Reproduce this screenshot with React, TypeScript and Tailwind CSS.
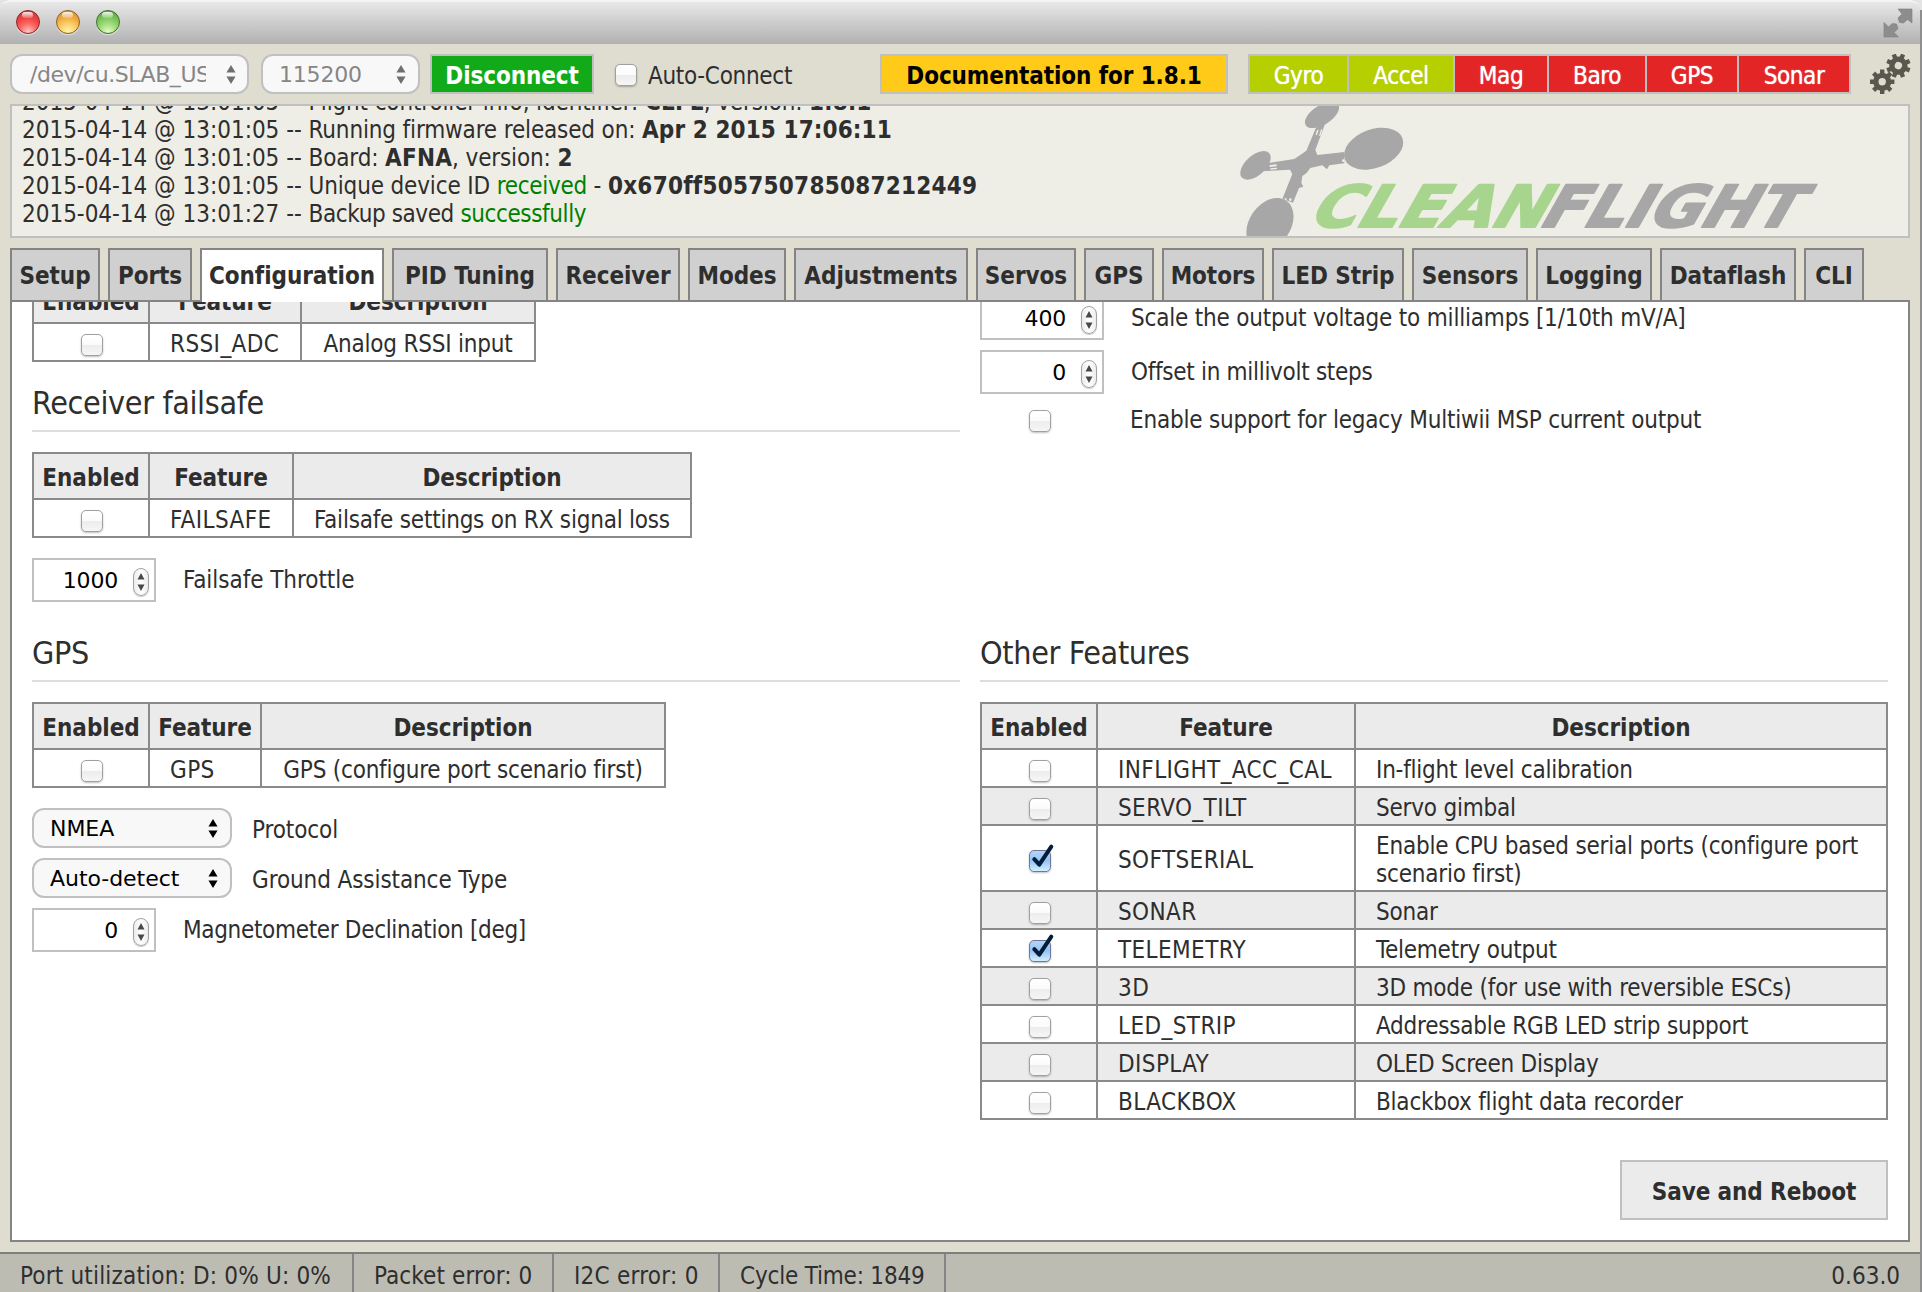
import type { ReactNode } from "react";

/* ---------- small controls ---------- */

function Checkbox({ checked = false }: { checked?: boolean }) {
  return (
    <span
      className={
        checked
          ? "relative block size-[22px] shrink-0 rounded-[5px] border-[1.5px] border-[#6f7894] bg-linear-to-b from-[#b4d4f6] via-[#94c4f5] to-[#d3f1ff] shadow-[0_1px_2px_rgba(0,0,0,0.25)]"
          : "relative block size-[22px] shrink-0 rounded-[5px] border-[1.5px] border-[#a0a0a0] bg-[linear-gradient(#ffffff_0%,#fbfbfb_48%,#ededed_52%,#f6f6f6_100%)] shadow-[0_1px_2px_rgba(0,0,0,0.25)]"
      }
    >
      {checked && (
        <svg className="absolute -top-[7px] -left-[2px] h-[28px] w-[28px] overflow-visible" viewBox="0 0 28 28">
          <path d="M6.3 15.2 L11.3 20.7 L23.3 2.6" fill="none" stroke="#041c38" strokeWidth="4" strokeLinecap="round" strokeLinejoin="round" />
        </svg>
      )}
    </span>
  );
}

function Arrows({ className }: { className: string }) {
  return (
    <svg className={className} viewBox="0 0 10 20">
      <path d="M5 0 L9.8 8 H0.2 Z M0.2 12 H9.8 L5 20 Z" fill="currentColor" />
    </svg>
  );
}

function NumberInput({ value }: { value: string }) {
  return (
    <div className="flex h-11 w-[124px] shrink-0 justify-end border-2 border-[#c0c0c0] bg-white pr-[5px]">
      <span className="pt-[7px] font-['DejaVu_Sans'] text-[22px] leading-[28px] tracking-[-0.2px] text-black">{value}</span>
      <span className="mt-2 ml-[15px] flex h-[28px] w-4 items-center justify-center rounded-full border-[1.5px] border-[#a2a2a2] bg-[linear-gradient(90deg,#ececec,#ffffff_50%,#ececec)] shadow-[0_1px_1px_rgba(0,0,0,0.2)]">
        <svg className="h-[20px] w-[8px] text-[#484848]" viewBox="0 0 8 20">
          <path d="M4 1 L7.5 7.4 H0.5 Z M0.5 12.6 H7.5 L4 19 Z" fill="currentColor" />
        </svg>
      </span>
    </div>
  );
}

function Select({ value }: { value: string }) {
  return (
    <div className="flex h-10 w-[200px] shrink-0 justify-between rounded-[12px] border-2 border-[#c0c0c0] bg-[#f8f8f8] pr-3 pl-4">
      <span className="pt-[5px] font-['DejaVu_Sans'] text-[22px] leading-[28px] tracking-[-0.05px] text-black">{value}</span>
      <Arrows className="mt-[9px] h-[19px] w-[10px] text-black" />
    </div>
  );
}

/* ---------- title bar ---------- */

function Light({ tone }: { tone: string }) {
  return (
    <span className={`relative block size-6 overflow-hidden rounded-full border-[1.5px] shadow-[0_1px_1px_rgba(255,255,255,0.6)] ${tone}`}>
      <span className="absolute top-[1px] left-[5px] h-[6px] w-[11px] rounded-full bg-linear-to-b from-white/90 to-white/20" />
    </span>
  );
}

function TitleBar() {
  return (
    <div className="flex h-11 shrink-0 justify-between rounded-t-[9px] border-t-2 border-[#f4f4f4] bg-linear-to-b from-[#e8e8e8] to-[#b1b1b1] pl-4">
      <div className="mt-2 flex gap-4">
        <Light tone="border-[#8d2423] bg-[radial-gradient(circle_at_50%_95%,#ffc9c4_0%,#fb6a66_35%,#ee4343_60%,#c63a3a_100%)]" />
        <Light tone="border-[#8f6020] bg-[radial-gradient(circle_at_50%_95%,#fff3ae_0%,#fbd16c_35%,#f2ac45_60%,#c98a35_100%)]" />
        <Light tone="border-[#3f7029] bg-[radial-gradient(circle_at_50%_95%,#e4fcc4_0%,#a4dd80_35%,#7cc75c_60%,#589a41_100%)]" />
      </div>
      <svg className="mt-[6px] mr-[7px] h-8 w-[30px]" viewBox="63 8 30 32">
        <path d="M78 9 H92 V23 L87.5 19.5 L83.5 23 L79.5 22.5 L78 18 L82 14 Z" fill="#8d8d8d" stroke="#7c7c7c" strokeWidth=".6" />
        <path d="M64 22.5 V37 H78.5 L74 32.5 L78 28.5 L76.5 24 L72.5 23.5 L68.5 27 Z" fill="#8d8d8d" stroke="#7c7c7c" strokeWidth=".6" />
      </svg>
    </div>
  );
}

/* ---------- toolbar ---------- */

const SENSORS = [
  { name: "Gyro", cell: "w-[97px] bg-[#b5cf00]" },
  { name: "Accel", cell: "w-[104px] bg-[#b5cf00]" },
  { name: "Mag", cell: "w-[92px] bg-[#e42526]" },
  { name: "Baro", cell: "w-[96px] bg-[#e42526]" },
  { name: "GPS", cell: "w-[90px] bg-[#e42526]" },
  { name: "Sonar", cell: "w-[110px] bg-[#e42526]" },
];

const TEETH = [0, 45, 90, 135, 180, 225, 270, 315];

function Gear({ x, y, turn }: { x: number; y: number; turn: number }) {
  return (
    <g transform={`translate(${x} ${y}) rotate(${turn})`} stroke="#5a584e" fill="none">
      <circle r="6.4" strokeWidth="5.4" />
      {TEETH.map((a) => (
        <path key={a} d="M0 -8 V-12.2" strokeWidth="4.4" transform={`rotate(${a})`} />
      ))}
    </g>
  );
}

function Toolbar() {
  return (
    <div className="flex h-[60px] shrink-0 pt-[10px] pl-[10px]">
      <div className="flex h-10 w-[239px] justify-between rounded-[12px] border-2 border-[#c0c0c0] bg-[#f8f8f8] pr-[11px] pl-[18px]">
        <span className="w-[176px] overflow-hidden pt-[5px] font-['DejaVu_Sans'] text-[22px] leading-[28px] tracking-[-0.45px] whitespace-nowrap text-[#868686]">/dev/cu.SLAB_US</span>
        <Arrows className="mt-[9px] h-[19px] w-[10px] text-[#6f6f6f]" />
      </div>
      <div className="ml-3 flex h-10 w-[159px] justify-between rounded-[12px] border-2 border-[#c0c0c0] bg-[#f8f8f8] pr-3 pl-4">
        <span className="pt-[5px] font-['DejaVu_Sans'] text-[22px] leading-[28px] tracking-[-0.2px] text-[#868686]">115200</span>
        <Arrows className="mt-[9px] h-[19px] w-[10px] text-[#6f6f6f]" />
      </div>
      <div className="ml-[10px] h-10 w-[164px] border-2 border-[#c0c0c0] bg-[#11aa18] pt-[6px] text-center font-bold tracking-[-0.1px] text-white">Disconnect</div>
      <div className="mt-[10px] ml-[21px]">
        <Checkbox />
      </div>
      <div className="mt-2 ml-[11px] w-[232px] tracking-[-0.3px]">Auto-Connect</div>
      <div className="h-10 w-[348px] border-2 border-[#c0c0c0] bg-[#ffca18] pt-[6px] text-center font-bold tracking-[-0.1px] text-black">Documentation for 1.8.1</div>
      <div className="ml-5 flex h-10 w-[603px] gap-[2px] border-2 border-[#c0c0c0] bg-[#c0c0c0] text-center tracking-[-0.4px] text-white">
        {SENSORS.map((s) => (
          <div key={s.name} className={`pt-[6px] [text-shadow:0_0_1px_#fff] ${s.cell}`}>
            {s.name}
          </div>
        ))}
      </div>
      <svg className="ml-[18px] h-[42px] w-[42px] shrink-0" viewBox="0 0 42 42">
        <Gear x={29.4} y={11.7} turn={22.5} />
        <Gear x={13.2} y={27.8} turn={0} />
      </svg>
    </div>
  );
}

/* ---------- log panel ---------- */

function Logo() {
  return (
    <svg className="absolute top-0 left-[1223px] h-[130px] w-[600px]" viewBox="0 18 1800 390">
      <g fill="#a7a7a7">
        <ellipse cx="416" cy="146" rx="92" ry="58" transform="rotate(-20 416 146)" />
        <ellipse cx="261" cy="45" rx="57.5" ry="29" transform="rotate(-32 261 45)" />
        <ellipse cx="61.5" cy="196" rx="55" ry="30" transform="rotate(-42 61.5 196)" />
        <ellipse cx="105" cy="373" rx="86" ry="62" transform="rotate(-55 105 373)" />
        <path d="M246 76 L270 72 L241 150 L247 165 L328 156 V190 L283 196 L276 208 L262 196 L226 204 L214 220 L202 228 L199 248 L205 260 L192 264 L174 308 L142 297 L172 222 L165 209 L80 214 L95 190 L178 177 L214 152 Z" />
      </g>
      <g fill="#efeee6">
        <circle cx="325" cy="182" r="4" />
        <path d="M104 195 L125 193 V199 L104 201 Z M106 205 L126 203 V207 L106 209 Z M246 90 L251 90 L246 105 L242 105 Z M258 88 L262 88 L256 108 L252 108 Z" />
        <circle cx="166" cy="299" r="4" />
        <circle cx="152" cy="297" r="3" />
      </g>
      <g className="font-['DejaVu_Sans'] font-bold" fontSize="174" strokeWidth="6" strokeLinejoin="round" transform="translate(0 380) skewX(-29.5)">
        <text x="212" y="0" textLength="706" lengthAdjust="spacingAndGlyphs" fill="#a8d58e" stroke="#a8d58e">CLEAN</text>
        <text x="904" y="0" textLength="770" lengthAdjust="spacingAndGlyphs" fill="#a7a7a7" stroke="#a7a7a7">FLIGHT</text>
      </g>
    </svg>
  );
}

function Stamp({ time }: { time: string }) {
  return <span className="tracking-[-0.02px]">2015-04-14 @ {time} -- </span>;
}

function LogPanel() {
  return (
    <div className="relative mx-[10px] h-[134px] w-[1900px] shrink-0 overflow-hidden border-2 border-[#c0c0c0] bg-[#efeee6]">
      <Logo />
      <div className="relative -mt-[18px] pl-[10px] tracking-[-0.15px] whitespace-pre">
        <p><Stamp time="13:01:05" />Flight controller info, identifier: <b className="tracking-[0.2px]">CLFL</b>, version: <b className="tracking-[0.2px]">1.8.1</b></p>
        <p><Stamp time="13:01:05" />Running firmware released on: <b className="tracking-[0.1px]">Apr 2 2015 17:06:11</b></p>
        <p><Stamp time="13:01:05" />Board: <b className="tracking-[0.2px]">AFNA</b>, version: <b>2</b></p>
        <p><Stamp time="13:01:05" />Unique device ID <span className="tracking-[-0.3px] text-[#008000]">received</span> - <b className="tracking-[0.25px]">0x670ff505750785087212449</b></p>
        <p><Stamp time="13:01:27" /><span className="tracking-[-0.4px]">Backup saved <span className="text-[#008000]">successfully</span></span></p>
      </div>
    </div>
  );
}

/* ---------- tabs ---------- */

const TABS = [
  { name: "Setup", w: "w-[90px]" },
  { name: "Ports", w: "w-[84px]" },
  { name: "Configuration", w: "w-[184px]" },
  { name: "PID Tuning", w: "w-[156px]" },
  { name: "Receiver", w: "w-[124px]" },
  { name: "Modes", w: "w-[98px]" },
  { name: "Adjustments", w: "w-[174px]" },
  { name: "Servos", w: "w-[100px]" },
  { name: "GPS", w: "w-[70px]" },
  { name: "Motors", w: "w-[102px]" },
  { name: "LED Strip", w: "w-[132px]" },
  { name: "Sensors", w: "w-[116px]" },
  { name: "Logging", w: "w-[116px]" },
  { name: "Dataflash", w: "w-[136px]" },
  { name: "CLI", w: "w-[60px]" },
];

function Tabs() {
  return (
    <div className="relative z-10 mt-[10px] flex h-[52px] shrink-0 gap-2 pl-[10px]">
      {TABS.map((t) => (
        <div
          key={t.name}
          className={`border-2 border-b-0 border-[#848484] pt-3 text-center font-bold tracking-[-0.05px] whitespace-nowrap ${t.w} ${
            t.name === "Configuration" ? "h-[54px] bg-white" : "h-[52px] bg-[#d0d0d0]"
          }`}
        >
          <span className="-mx-4">{t.name}</span>
        </div>
      ))}
    </div>
  );
}

/* ---------- configuration content ---------- */

function Heading({ children }: { children: ReactNode }) {
  return <h2 className="mb-5 h-12 border-b-2 border-[#dddddd] text-[32px] leading-[38px] tracking-[-0.35px]">{children}</h2>;
}

type Row = { feature: string; text: string; on?: boolean };

function FeatureTable({ rows, cols, centered }: { rows: Row[]; cols: string; centered?: boolean }) {
  const align = centered ? "justify-center" : "pl-5";
  return (
    <div className="w-fit border-t-2 border-l-2 border-[#8a8a8a] *:border-b-2 *:border-[#8a8a8a] *:*:border-r-2 *:*:border-[#8a8a8a]">
      <div className={`grid h-[46px] bg-[#ebebeb] text-center font-bold tracking-[-0.05px] *:pt-[10px] ${cols}`}>
        <div>Enabled</div>
        <div>Feature</div>
        <div>Description</div>
      </div>
      {rows.map((r, i) => (
        <div key={r.feature} className={`grid min-h-[38px] ${i % 2 ? "bg-[#ebebeb]" : "bg-white"} ${cols}`}>
          <div className="flex items-center justify-center pt-[6px] pl-[2px]">
            <Checkbox checked={r.on} />
          </div>
          <div className="flex items-center pt-[4px] pl-5 tracking-[0.4px]">{r.feature}</div>
          <div className={`flex items-center pt-[6px] pb-[2px] tracking-[-0.22px] ${align}`}>
            <span className="max-w-[500px]">{r.text}</span>
          </div>
        </div>
      ))}
    </div>
  );
}

const OTHER: Row[] = [
  { feature: "INFLIGHT_ACC_CAL", text: "In-flight level calibration" },
  { feature: "SERVO_TILT", text: "Servo gimbal" },
  { feature: "SOFTSERIAL", text: "Enable CPU based serial ports (configure port scenario first)", on: true },
  { feature: "SONAR", text: "Sonar" },
  { feature: "TELEMETRY", text: "Telemetry output", on: true },
  { feature: "3D", text: "3D mode (for use with reversible ESCs)" },
  { feature: "LED_STRIP", text: "Addressable RGB LED strip support" },
  { feature: "DISPLAY", text: "OLED Screen Display" },
  { feature: "BLACKBOX", text: "Blackbox flight data recorder" },
];

function Content() {
  return (
    <div className="mx-[10px] h-[942px] w-[1900px] shrink-0 overflow-hidden border-2 border-[#848484] bg-white">
      <div className="-mt-[28px] flex gap-5 pl-5">
        <div className="w-[928px] pt-[2px]">
          <FeatureTable centered cols="grid-cols-[116px_152px_234px]" rows={[{ feature: "RSSI_ADC", text: "Analog RSSI input" }]} />
          <div className="mt-[22px]">
            <Heading>Receiver failsafe</Heading>
          </div>
          <FeatureTable centered cols="grid-cols-[116px_144px_398px]" rows={[{ feature: "FAILSAFE", text: "Failsafe settings on RX signal loss" }]} />
          <div className="mt-5 flex gap-[27px]">
            <NumberInput value="1000" />
            <span className="pt-2 tracking-[-0.05px]">Failsafe Throttle</span>
          </div>
          <div className="mt-8">
            <Heading>GPS</Heading>
          </div>
          <FeatureTable centered cols="grid-cols-[116px_112px_404px]" rows={[{ feature: "GPS", text: "GPS (configure port scenario first)" }]} />
          <div className="mt-5 flex flex-col gap-[10px] tracking-[-0.1px]">
            <div className="flex gap-5">
              <Select value="NMEA" />
              <span className="pt-2">Protocol</span>
            </div>
            <div className="flex gap-5">
              <Select value="Auto-detect" />
              <span className="pt-2">Ground Assistance Type</span>
            </div>
            <div className="flex gap-[27px]">
              <NumberInput value="0" />
              <span className="pt-2 tracking-[-0.32px]">Magnetometer Declination [deg]</span>
            </div>
          </div>
        </div>

        <div className="w-[908px] pt-[22px] tracking-[-0.2px]">
          <div className="flex h-[338px] flex-col gap-[10px]">
            <div className="flex gap-[27px]">
              <NumberInput value="400" />
              <span className="pt-2">Scale the output voltage to milliamps [1/10th mV/A]</span>
            </div>
            <div className="flex gap-[27px]">
              <NumberInput value="0" />
              <span className="pt-2 tracking-[-0.3px]">Offset in millivolt steps</span>
            </div>
            <div className="flex pl-[49px]">
              <div className="mt-[6px]">
                <Checkbox />
              </div>
              <span className="pt-[2px] pl-[79px]">Enable support for legacy Multiwii MSP current output</span>
            </div>
          </div>
          <Heading>Other Features</Heading>
          <FeatureTable cols="grid-cols-[116px_258px_532px]" rows={OTHER} />
          <button className="mt-10 ml-auto block h-[60px] w-[268px] border-2 border-[#c0c0c0] bg-[#ebebeb] pt-1 font-bold tracking-[-0.1px]">Save and Reboot</button>
        </div>
      </div>
    </div>
  );
}

/* ---------- status bar ---------- */

function StatusBar() {
  return (
    <div className="mt-[10px] flex h-10 shrink-0 border-t-2 border-[#7f7f7b] bg-[#bdbcb3] whitespace-nowrap *:pt-2">
      <div className="w-[354px] border-r-2 border-[#848484] pl-5 tracking-[0.18px]">Port utilization: D: 0% U: 0%</div>
      <div className="w-[200px] border-r-2 border-[#848484] pl-5 tracking-[0.1px]">Packet error: 0</div>
      <div className="w-[166px] border-r-2 border-[#848484] pl-5 tracking-[0.25px]">I2C error: 0</div>
      <div className="w-[226px] border-r-2 border-[#848484] pl-5 tracking-[-0.2px]">Cycle Time: 1849</div>
      <div className="ml-auto pr-5">0.63.0</div>
    </div>
  );
}

export default function App() {
  return (
    <div className="flex h-[1292px] w-[1922px] bg-[#e4e4e4] font-['DejaVu_Sans_Condensed','DejaVu_Sans',sans-serif] text-[24px] leading-[28px] text-[#2e2e2e]">
      <div className="flex w-[1920px] flex-col overflow-hidden rounded-t-[9px] bg-[#deddcf]">
        <TitleBar />
        <Toolbar />
        <LogPanel />
        <Tabs />
        <Content />
        <StatusBar />
      </div>
      <div className="mt-[10px] w-[2px] bg-[#8f8f8f]" />
    </div>
  );
}
